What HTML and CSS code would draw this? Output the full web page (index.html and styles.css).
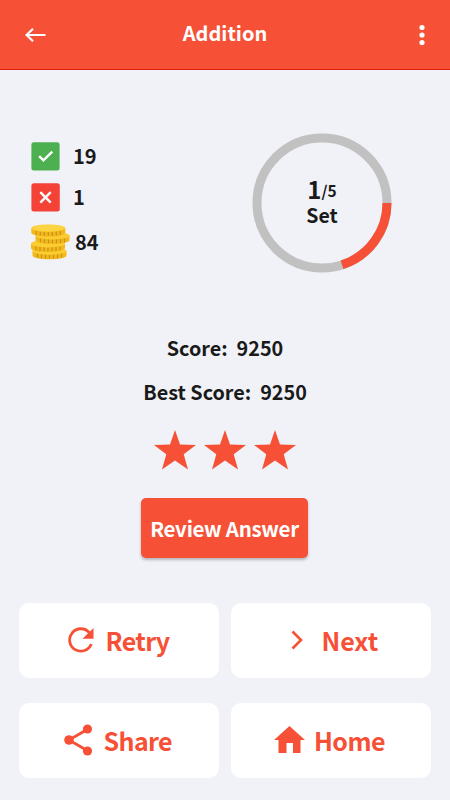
FILE: index.html
```html
<!DOCTYPE html>
<html lang="en">
<head>
<meta charset="utf-8">
<title>Addition</title>
<link rel="stylesheet" href="styles.css">
</head>
<body>
<header class="bar">
  <svg class="back" width="22" height="16" viewBox="0 0 22 16"><path d="M20.500 8H2M8 1.800L1.500 8L8 14.200"/></svg>
  <h1 class="title">Addition</h1>
  <svg class="more" width="6" height="22" viewBox="0 0 6 22"><circle cx="3" cy="3.500" r="2.600"/><circle cx="3" cy="11" r="2.600"/><circle cx="3" cy="18.500" r="2.600"/></svg>
</header>
<main>
  <section class="summary">
    <div class="stats">
      <div class="stat">
        <svg width="29" height="29" viewBox="0 0 29 29"><rect x=".4" y=".2" width="28.2" height="28.2" rx="2.5" fill="#4caf50"/><path d="M8.200 14.200l4.200 4.200L21.300 9.600" class="mark"/></svg>
        <span>19</span>
      </div>
      <div class="stat">
        <svg width="29" height="29" viewBox="0 0 29 29"><rect x=".4" y=".2" width="28.4" height="28.4" rx="2.5" fill="#f44336"/><path d="M9.300 9.200l10.400 10.400M19.700 9.200L9.300 19.600" class="mark"/></svg>
        <span>1</span>
      </div>
      <div class="stat coins">
        <svg width="39" height="36" viewBox="0 0 39 36">
          <defs>
            <g id="coin">
              <path d="M0 3.500v4.700C0 10.300 7.400 12 17 12s17-1.700 17-3.800V3.500z" fill="#f3b91b"/>
              <path d="M5 6.300v4M9 6.900v4M13 7.200v4M17 7.300v4M21 7.200v4M25 6.900v4M29 6.300v4" stroke="#c8951b" stroke-width="1.300"/>
              <ellipse cx="17" cy="3.700" rx="17" ry="3.700" fill="#fbcd32"/>
            </g>
          </defs>
          <use href="#coin" x="1.500" y="23.300"/>
          <use href="#coin" x="0" y="16"/>
          <use href="#coin" x="4.500" y="8"/>
          <use href="#coin" x=".3" y=".5"/>
          <ellipse cx="17.300" cy="3.900" rx="15" ry="2.900" fill="#fdd544"/>
        </svg>
        <span>84</span>
      </div>
    </div>
    <div class="ring">
      <svg width="140" height="140" viewBox="0 0 140 140"><circle cx="70" cy="70" r="65" class="track"/><circle cx="70" cy="70" r="65" class="progress" pathLength="360" stroke-dasharray="72 288"/></svg>
      <div class="label"><div class="count">1<small>/5</small></div><div class="set">Set</div></div>
    </div>
  </section>
  <section class="result">
    <p class="score">Score:&nbsp; 9250</p>
    <p class="score best">Best Score:&nbsp; 9250</p>
    <div class="stars">
      <svg width="42" height="40" viewBox="0 0 42 40"><path d="M21 0l5 14.500L42 15 29.700 24.300 34 39.500 21 30.500 8 39.500 12.300 24.300 0 15 16 14.500z"/></svg>
      <svg width="42" height="40" viewBox="0 0 42 40"><path d="M21 0l5 14.500L42 15 29.700 24.300 34 39.500 21 30.500 8 39.500 12.300 24.300 0 15 16 14.500z"/></svg>
      <svg width="42" height="40" viewBox="0 0 42 40"><path d="M21 0l5 14.500L42 15 29.700 24.300 34 39.500 21 30.500 8 39.500 12.300 24.300 0 15 16 14.500z"/></svg>
    </div>
    <button class="review">Review Answer</button>
  </section>
  <nav class="actions">
    <button class="action retry"><svg width="26" height="27" viewBox="0 -1 26 27"><path d="M21.300 4.600A11.200 11.200 0 1 0 23.300 16" fill="none" stroke="#f65136" stroke-width="2.800"/><path d="M25.500 0v10.800H14.500z"/></svg><span>Retry</span></button>
    <button class="action next"><svg width="12" height="20" viewBox="0 0 12 20"><path d="M1.500 1.500L10 10l-8.500 8.500" fill="none" stroke="#f65136" stroke-width="2.600"/></svg><span>Next</span></button>
    <button class="action share"><svg width="29" height="32" viewBox="0 0 29 32"><path d="M24 5L5 16l19 11" fill="none" stroke="#f65136" stroke-width="2.800"/><circle cx="23.500" cy="5" r="4.600"/><circle cx="5" cy="16" r="4.800"/><circle cx="23.500" cy="27" r="4.600"/></svg><span>Share</span></button>
    <button class="action home"><svg width="31" height="28" viewBox="0 0 31 28"><path d="M15.500 0L31 14h-4.500v13H19V17h-6.500v10H4.500V14H0z"/></svg><span>Home</span></button>
  </nav>
</main>
</body>
</html>
```

FILE: styles.css
```css
* { box-sizing: border-box; }
body {
  margin: 0;
  width: 450px;
  height: 800px;
  overflow: hidden;
  background: #f1f2f8;
  color: #1a1a1a;
  font-family: "Noto Sans CJK SC", "Noto Sans", sans-serif;
  font-weight: 600;
}
svg { display: block; flex: none; fill: #f65136; }
p, h1 { margin: 0; }
button { border: 0; padding: 0; font: inherit; }
.bar {
  height: 70px;
  display: grid;
  grid-template-columns: 22px 1fr 6px;
  align-items: center;
  padding: 0 25px;
  background: #f65136;
  border-bottom: 1px solid #df1d0c;
}
.back { fill: none; stroke: #fff; stroke-width: 2.200; }
.more { fill: #fff; }
.title {
  padding: 0 16px 3px 0;
  color: #fff;
  text-align: center;
  font-size: 20px;
  line-height: 30px;
  font-weight: 600;
}
.summary {
  display: flex;
  justify-content: space-between;
  height: 252px;
  padding: 63px 58px 0 31px;
}
.stats { padding-top: 9px; font-size: 20px; }
.stat { display: flex; gap: 13px; height: 41px; line-height: 28px; }
.coins { gap: 5px; line-height: 35px; }
.mark { fill: none; stroke: #fff; stroke-width: 2.400; }
.ring { display: grid; width: 140px; height: 140px; }
.ring > * { grid-area: 1 / 1; }
.track { fill: none; stroke: #c1c1c1; stroke-width: 9; }
.progress { fill: none; stroke: #f65136; stroke-width: 9; }
.label { text-align: center; padding-top: 42px; }
.count { height: 28px; font-size: 24px; line-height: 27px; }
.count small { font-size: 15.500px; line-height: 1; vertical-align: 2px; }
.set { font-size: 19.500px; line-height: 24px; }
.result { display: flex; flex-direction: column; align-items: center; height: 280.500px; padding-top: 11px; }
.score { font-size: 19.800px; line-height: 30px; }
.best { margin-top: 14px; }
.stars { display: flex; gap: 8px; margin-top: 22.500px; }
.review {
  width: 167px;
  height: 60px;
  margin: 28px 1px 0 0;
  border-radius: 5px;
  background: #f65136;
  box-shadow: 0 2px 3px rgba(0, 0, 0, .25);
  color: #fff;
  font-size: 20.500px;
  letter-spacing: -.3px;
  line-height: 60px;
}
.actions {
  display: grid;
  grid-template-columns: 200px 200px;
  grid-auto-rows: 75px;
  gap: 25px 12.500px;
  padding-left: 18.500px;
}
.action {
  display: flex;
  align-items: center;
  border-radius: 10px;
  background: #fff;
  color: #f65136;
  font-size: 25px;
  letter-spacing: -.6px;
  line-height: 73px;
}
.retry { padding-left: 49px; gap: 12px; }
.next { padding-left: 60px; gap: 18.500px; letter-spacing: 0; }
.share { padding-left: 45px; gap: 11px; }
.home { padding-left: 43px; gap: 9px; }
```
